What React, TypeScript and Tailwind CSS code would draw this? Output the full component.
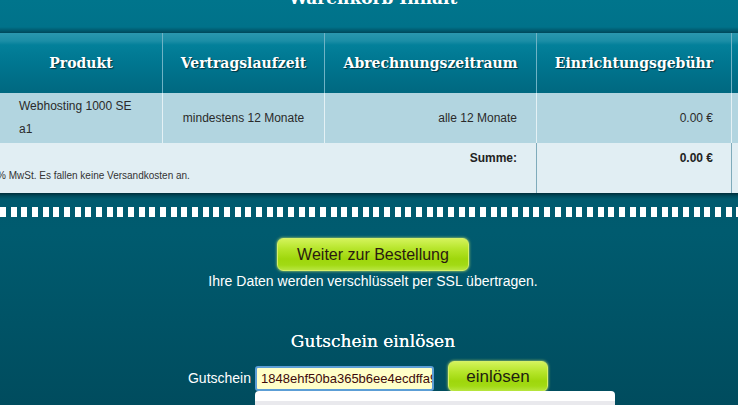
export default function App() {
  const slab = "font-['DejaVu_Serif',Georgia,serif]";
  return (
    <div className="relative w-[738px] h-[405px] overflow-hidden bg-[#004f61] font-['Liberation_Sans',Arial,sans-serif]">
      {/* title strip */}
      <div className="flex h-[33px] flex-col bg-[linear-gradient(#00758c_0px,#00728a_27px,#00485a_33px)] pl-[8px]">
        <h1 className={`${slab} mt-[-12px] text-center text-[17px] leading-[20px] font-bold text-white`}>
          Warenkorb Inhalt
        </h1>
      </div>

      {/* table */}
      <div className="w-[760px]">
        {/* header */}
        <div
          className={`${slab} flex h-[60px] bg-[linear-gradient(#2b97ae_0px,#1b8ea6_8px,#03809a_12px,#007690_30px,#006880_60px)] text-[14px] font-bold text-white [text-shadow:1px_1px_1px_#003340]`}
        >
          <div className="flex w-[163px] items-center justify-center border-r border-[#6fb3c5]">Produkt</div>
          <div className="flex w-[162px] items-center justify-center border-r border-[#6fb3c5]">Vertragslaufzeit</div>
          <div className="flex w-[212px] items-center justify-center border-r border-[#6fb3c5]">Abrechnungszeitraum</div>
          <div className="flex w-[195px] items-center justify-center border-r border-[#6fb3c5]">Einrichtungsgebühr</div>
          <div className="flex-1" />
        </div>
        {/* row 1 */}
        <div className="flex h-[50px] bg-[#b2d5e0] text-[12px] text-[#2a2a2a]">
          <div className="flex w-[163px] items-center border-r border-[#e4f1f5] px-[19px] leading-[23px]">
            <span>Webhosting 1000 SE<br />a1</span>
          </div>
          <div className="flex w-[162px] items-center justify-center border-r border-[#e4f1f5]">mindestens 12 Monate</div>
          <div className="flex w-[212px] items-center justify-end border-r border-[#e4f1f5] pr-[19px]">alle 12 Monate</div>
          <div className="flex w-[195px] items-center justify-end border-r border-[#e4f1f5] pr-[18px]">0.00 €</div>
          <div className="flex-1" />
        </div>
        {/* sum row */}
        <div className="flex h-[50px] bg-[#e1eef3] text-[12px] text-[#222]">
          <div className="w-[537px] border-r border-[#7fabbb]">
            <div className="pt-[6px] pr-[19px] text-right font-bold">Summe:</div>
            <div className="ml-[-3px] mt-[1px] text-[10px] text-[#333]">% MwSt. Es fallen keine Versandkosten an.</div>
          </div>
          <div className="w-[195px] border-r border-[#7fabbb] pt-[6px] pr-[18px] text-right font-bold">0.00 €</div>
          <div className="flex-1" />
        </div>
      </div>

      {/* lower area */}
      <div className="h-[212px] bg-[linear-gradient(#002d39_0px,#004b5c_3px,#005a6e_6px,#005b6f_40px,#004c5e_212px)]">
        <div className="pt-[14px]">
          <div className="h-[10px] bg-[repeating-linear-gradient(90deg,#ffffff_0px,#ffffff_6px,transparent_6px,transparent_10.67px)]" />
        </div>

        <div className="flex flex-col items-center pl-[8px]">
          <button className="mt-[21px] h-[33px] w-[192px] rounded-[6px] border border-[#d6f06a] bg-[linear-gradient(#d3f35a_0px,#b6e52a_10px,#9fd70c_20px,#a2da14_26px,#c0ea50_33px)] text-[16px] text-[#2a1a10] shadow-[0_0_3px_#c8e860]">
            Weiter zur Bestellung
          </button>
          <p className="mt-[2px] text-[14px] leading-[16px] text-white">
            Ihre Daten werden verschlüsselt per SSL übertragen.
          </p>
          <h2 className={`${slab} mt-[42px] text-[17px] leading-[20px] text-white [text-shadow:0_0_0.5px_#ffffff]`}>Gutschein einlösen</h2>
        </div>

        <div className="mt-[10px] flex items-center justify-center pr-[2px]">
          <span className="mr-[4px] mt-[4px] text-[14px] text-white">Gutschein</span>
          <div className="mt-[4px] flex h-[25px] w-[179px] items-center overflow-hidden rounded-[3px] border-2 border-[#5c9ed6] bg-[#ffffc8] px-[4px] text-[13px] whitespace-nowrap text-[#3d0a0a]">
            1848ehf50ba365b6ee4ecdffa9c1
          </div>
          <button className="ml-[14px] h-[31px] w-[100px] rounded-[6px] border border-[#d6f06a] bg-[linear-gradient(#d3f35a_0px,#b6e52a_10px,#9fd70c_19px,#a2da14_24px,#c0ea50_31px)] text-[17px] text-[#1e1e10] shadow-[0_0_3px_#c8e860]">
            einlösen
          </button>
        </div>
      </div>

      {/* autocomplete dropdown */}
      <div className="absolute left-[255px] top-[391px] h-[20px] w-[360px] rounded-t-[4px] bg-white">
        <div className="mt-[10px] h-[10px] bg-[#e9e9ed]" />
      </div>
    </div>
  );
}
